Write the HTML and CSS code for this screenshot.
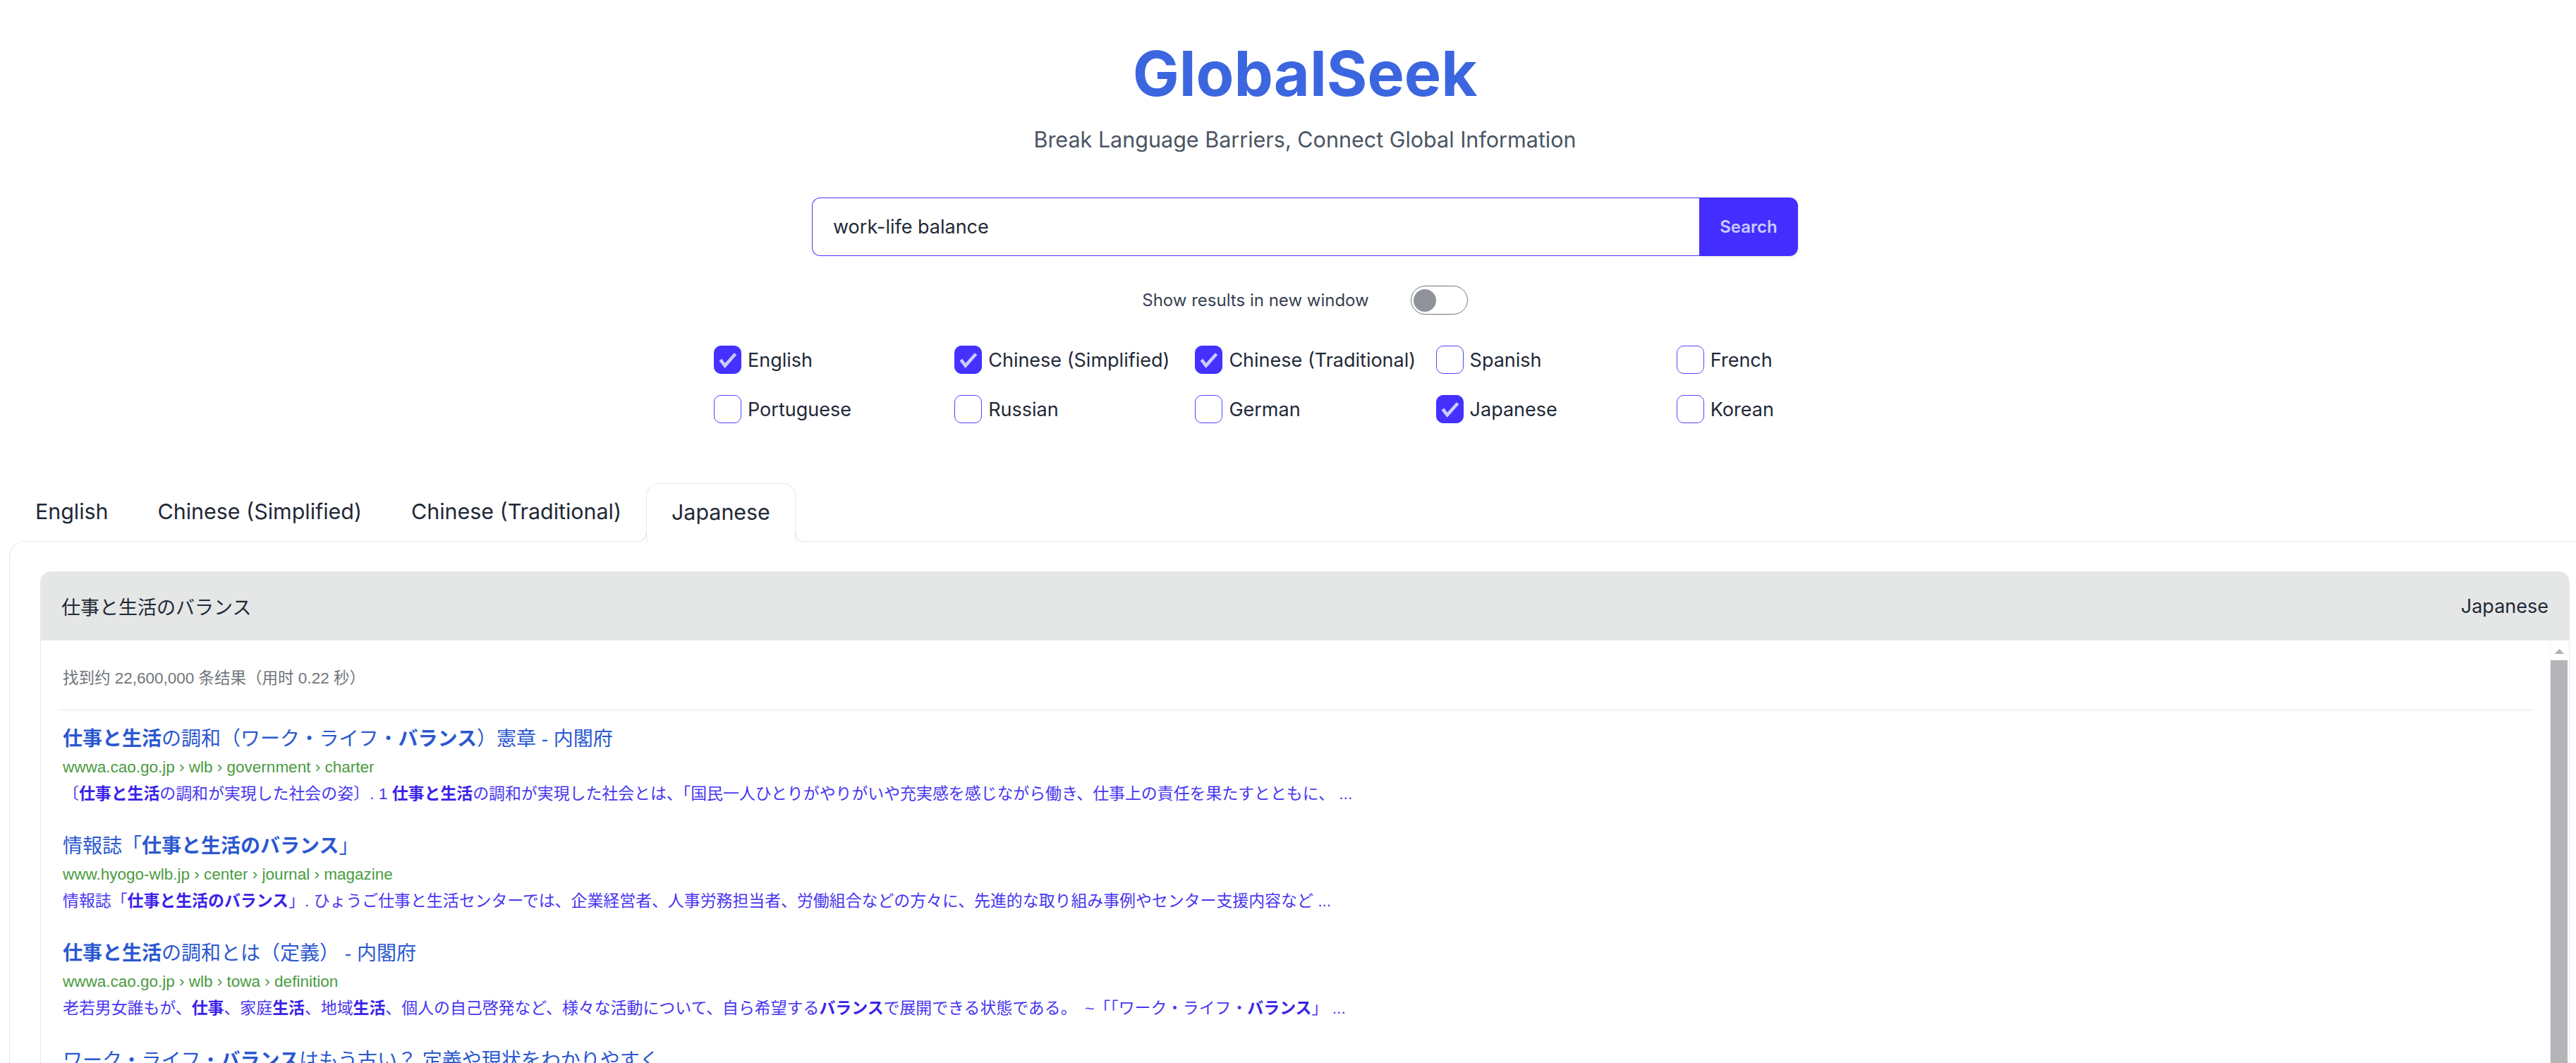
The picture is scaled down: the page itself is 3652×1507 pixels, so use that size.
FILE: index.html
```html
<!DOCTYPE html>
<html lang="en">
<head>
<meta charset="utf-8">
<title>GlobalSeek</title>
<link rel="stylesheet" href="styles.css">
</head>
<body>
<div class="page">
  <header class="hero">
    <h1 class="brand">GlobalSeek</h1>
    <p class="tagline">Break Language Barriers, Connect Global Information</p>
    <form class="search">
      <input class="search-input" type="text" value="work-life balance">
      <button class="search-btn" type="button">Search</button>
    </form>
    <div class="newwin">
      <span class="newwin-label">Show results in new window</span>
      <span class="toggle"><span class="knob"></span></span>
    </div>
    <div class="langs">
      <label class="lang"><span class="box checked"><svg viewBox="0 0 40 40"><path d="M9 20 L16 29 L32 11"/></svg></span><span>English</span></label>
      <label class="lang"><span class="box checked"><svg viewBox="0 0 40 40"><path d="M9 20 L16 29 L32 11"/></svg></span><span>Chinese (Simplified)</span></label>
      <label class="lang"><span class="box checked"><svg viewBox="0 0 40 40"><path d="M9 20 L16 29 L32 11"/></svg></span><span>Chinese (Traditional)</span></label>
      <label class="lang"><span class="box"></span><span>Spanish</span></label>
      <label class="lang"><span class="box"></span><span>French</span></label>
      <label class="lang"><span class="box"></span><span>Portuguese</span></label>
      <label class="lang"><span class="box"></span><span>Russian</span></label>
      <label class="lang"><span class="box"></span><span>German</span></label>
      <label class="lang"><span class="box checked"><svg viewBox="0 0 40 40"><path d="M9 20 L16 29 L32 11"/></svg></span><span>Japanese</span></label>
      <label class="lang"><span class="box"></span><span>Korean</span></label>
    </div>
  </header>

  <nav class="tabs">
    <a class="tab">English</a>
    <a class="tab">Chinese (Simplified)</a>
    <a class="tab">Chinese (Traditional)</a>
    <a class="tab active">Japanese</a>
  </nav>

  <section class="panel">
    <div class="card">
      <div class="card-head">
        <span class="query" lang="ja">仕事と生活のバランス</span>
        <span class="card-lang">Japanese</span>
      </div>
      <div class="card-body">
        <div class="results" lang="ja">
          <div class="stats" lang="zh-CN">找到约 22,600,000 条结果（用时 0.22 秒）</div>
          <div class="list">
            <div class="result">
              <a class="r-title"><b>仕事と生活</b>の調和（ワーク・ライフ・<b>バランス</b>）憲章 - 内閣府</a>
              <div class="r-url">wwwa.cao.go.jp › wlb › government › charter</div>
              <div class="r-snip">〔<b>仕事と生活</b>の調和が実現した社会の姿〕. 1 <b>仕事と生活</b>の調和が実現した社会とは、「国民一人ひとりがやりがいや充実感を感じながら働き、仕事上の責任を果たすとともに、 ...</div>
            </div>
            <div class="result">
              <a class="r-title">情報誌「<b>仕事と生活のバランス</b>」</a>
              <div class="r-url">www.hyogo-wlb.jp › center › journal › magazine</div>
              <div class="r-snip">情報誌「<b>仕事と生活のバランス</b>」. ひょうご仕事と生活センターでは、企業経営者、人事労務担当者、労働組合などの方々に、先進的な取り組み事例やセンター支援内容など ...</div>
            </div>
            <div class="result">
              <a class="r-title"><b>仕事と生活</b>の調和とは（定義） - 内閣府</a>
              <div class="r-url">wwwa.cao.go.jp › wlb › towa › definition</div>
              <div class="r-snip">老若男女誰もが、<b>仕事</b>、家庭<b>生活</b>、地域<b>生活</b>、個人の自己啓発など、様々な活動について、自ら希望する<b>バランス</b>で展開できる状態である。　~「「ワーク・ライフ・<b>バランス</b>」 ...</div>
            </div>
            <div class="result">
              <a class="r-title">ワーク・ライフ・<b>バランス</b>はもう古い？ 定義や現状をわかりやすく</a>
            </div>
          </div>
        </div>
        <div class="scrollbar" aria-hidden="true">
          <span class="sb-arrow"></span>
          <span class="sb-thumb"></span>
        </div>
      </div>
    </div>
  </section>
</div>
</body>
</html>
```

FILE: styles.css
```css
* { box-sizing: border-box; }

html, body {
  margin: 0;
  padding: 0;
  overflow: hidden;
  background: #ffffff;
}

body {
  font-family: Inter, "Noto Sans CJK JP", sans-serif;
  color: #1f2937;
}

.page {
  width: 3674px;
  margin-left: 13px;
}

/* ---------- hero ---------- */
.hero {
  display: flex;
  flex-direction: column;
  align-items: center;
  padding-top: 60px;
}

.brand {
  margin: 0;
  font-size: 88px;
  line-height: 88px;
  font-weight: 700;
  color: #3b66e0;
}

.tagline {
  margin: 30px 0 0;
  font-size: 30.5px;
  line-height: 40px;
  color: #4b5563;
}

.search {
  margin: 62px 0 0;
  display: flex;
  width: 1398px;
  height: 83px;
}

.search-input {
  flex: 1;
  min-width: 0;
  height: 100%;
  border: 1px solid #4a36ff;
  border-right: 0;
  border-radius: 12px 0 0 12px;
  padding: 0 29px;
  font: 400 27px Inter, sans-serif;
  color: #1f2937;
  outline: none;
  background: #fff;
}

.search-btn {
  width: 140px;
  height: 100%;
  border: 0;
  border-radius: 0 12px 12px 0;
  background: #432eff;
  color: #c9cbfe;
  font: 600 24px Inter, sans-serif;
  box-shadow: 0 2px 4px rgba(0, 0, 0, 0.08);
}

.newwin {
  margin-top: 42px;
  display: flex;
  align-items: center;
  gap: 59px;
}

.newwin-label {
  font-size: 24px;
  line-height: 41px;
  color: #374151;
}

.toggle {
  width: 81px;
  height: 41px;
  border: 1.5px solid #6b7280;
  border-radius: 999px;
  display: flex;
  align-items: center;
  padding: 0 3px;
}

.knob {
  width: 32px;
  height: 32px;
  border-radius: 50%;
  background: #8f9399;
}

.langs {
  margin-top: 44px;
  width: 1736px;
  padding-left: 30px;
  display: grid;
  grid-template-columns: repeat(5, 1fr);
  row-gap: 30px;
}

.lang {
  display: flex;
  align-items: center;
  gap: 9px;
  height: 40px;
  font-size: 27px;
  color: #1f2937;
}

.box {
  width: 39px;
  height: 40px;
  border: 1px solid #5542ff;
  border-radius: 10px;
  background: #fff;
  flex: none;
  display: flex;
}

.box.checked {
  background: #4430ff;
  border-color: #4430ff;
}

.box svg {
  width: 100%;
  height: 100%;
}

.box path {
  fill: none;
  stroke: #c8ccfd;
  stroke-width: 5;
}

/* ---------- tabs ---------- */
.tabs {
  display: flex;
  align-items: flex-start;
  height: 82px;
  margin-top: 85px;
  padding-left: 2px;
  position: relative;
  z-index: 1;
}

.tab {
  height: 82px;
  padding: 0 35px;
  font-size: 30.4px;
  line-height: 80px;
  color: #1f2937;
}

.tab.active {
  position: relative;
  height: 83px;
  background: #fff;
  border: 1px solid #e5e7eb;
  border-bottom: 0;
  border-radius: 18px 18px 0 0;
}

.tab.active::before,
.tab.active::after {
  content: "";
  position: absolute;
  bottom: 0;
  width: 12px;
  height: 12px;
}

.tab.active::before {
  left: -13px;
  background: radial-gradient(circle at 0 0, transparent 10.8px, #e5e7eb 11.2px, #e5e7eb 12px, #fff 12.6px);
}

.tab.active::after {
  right: -13px;
  background: radial-gradient(circle at 100% 0, transparent 10.8px, #e5e7eb 11.2px, #e5e7eb 12px, #fff 12.6px);
}

/* ---------- panel ---------- */
.panel {
  border: 1px solid #e5e7eb;
  border-bottom: 0;
  border-top-left-radius: 22px;
  border-top-right-radius: 22px;
  padding: 42px 43px 60px;
  background: #fff;
}

.card {
  border: 1px solid #e5e7eb;
  border-radius: 15px 15px 0 0;
  overflow: hidden;
}

.card-head {
  height: 97px;
  padding: 0 29px;
  display: flex;
  align-items: center;
  justify-content: space-between;
  background: #e5e7e6;
  font-size: 27px;
  color: #1f2937;
}

.card-body {
  display: flex;
  height: 1000px;
  background: #fff;
}

.results {
  flex: 1;
  min-width: 0;
  overflow: hidden;
  padding: 38px 24px 60px;
  font-family: "Liberation Sans", Arial, "Noto Sans CJK JP", sans-serif;
}

/* drawn scrollbar of the results pane */
.scrollbar {
  width: 27px;
  flex: none;
  display: flex;
  flex-direction: column;
  border-left: 1px solid #f0f0f2;
  background: #fff;
}

.sb-arrow {
  height: 28px;
  flex: none;
  background-image:
    linear-gradient(to top left, #b0b0b5 50%, transparent 50%),
    linear-gradient(to top right, #b0b0b5 50%, transparent 50%);
  background-size: 7px 7px, 7px 7px;
  background-position: 5px 12px, 12px 12px;
  background-repeat: no-repeat;
}

.sb-thumb {
  height: 700px;
  margin-right: 2px;
  background: #b3b3b8;
}

.stats {
  padding: 0 7px 28px;
  font-family: "Liberation Sans", Arial, "Noto Sans CJK SC", sans-serif;
  font-size: 22.5px;
  line-height: 32px;
  color: #70757a;
  border-bottom: 1px solid #e5e7eb;
}

.list {
  padding-top: 21px;
}

.result {
  padding: 0 7px;
  margin-bottom: 38px;
}

.r-title {
  display: block;
  font-size: 28px;
  line-height: 40px;
  color: #2b58d0;
  text-decoration: none;
}

.r-url {
  font-size: 22.5px;
  line-height: 40px;
  color: #4a9b3f;
}

.r-snip {
  font-size: 22.9px;
  line-height: 34px;
  color: #4836f0;
}

.r-snip b {
  color: #3a22e8;
}
```
